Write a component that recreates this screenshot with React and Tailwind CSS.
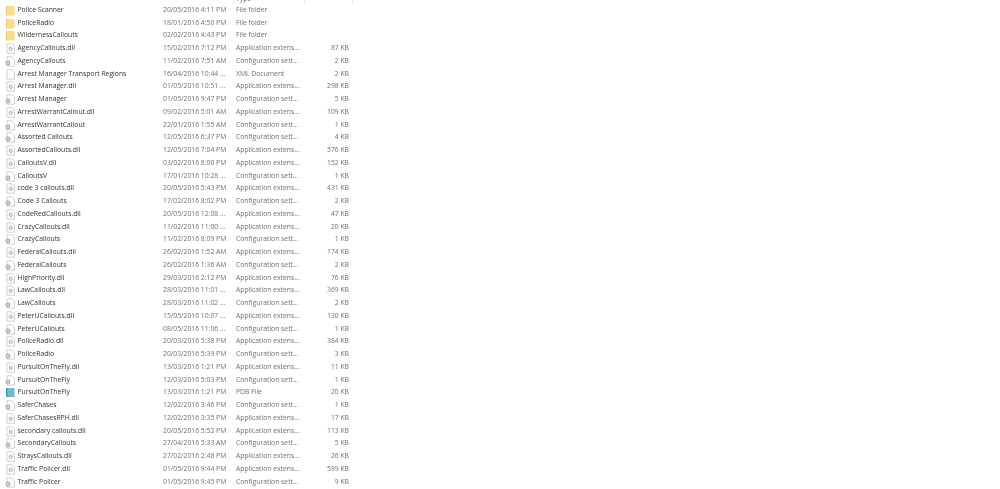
const FOLDER = 'folder', DLL = 'dll', CFG = 'cfg', XML = 'xml', PDB = 'pdb';
const APP = 'Application extens...', CONF = 'Configuration sett...';

const files = [
  ['Police Scanner', '20/05/2016 4:11 PM', 'File folder', '', FOLDER],
  ['PoliceRadio', '18/01/2016 4:50 PM', 'File folder', '', FOLDER],
  ['WildernessCallouts', '02/02/2016 4:43 PM', 'File folder', '', FOLDER],
  ['AgencyCallouts.dll', '15/02/2016 7:12 PM', APP, '87 KB', DLL],
  ['AgencyCallouts', '11/02/2016 7:51 AM', CONF, '2 KB', CFG],
  ['Arrest Manager Transport Regions', '16/04/2016 10:44 ...', 'XML Document', '2 KB', XML],
  ['Arrest Manager.dll', '01/05/2016 10:51 ...', APP, '298 KB', DLL],
  ['Arrest Manager', '01/05/2016 9:47 PM', CONF, '5 KB', CFG],
  ['ArrestWarrantCallout.dll', '09/02/2016 5:01 AM', APP, '109 KB', DLL],
  ['ArrestWarrantCallout', '22/01/2016 1:55 AM', CONF, '1 KB', CFG],
  ['Assorted Callouts', '12/05/2016 6:37 PM', CONF, '4 KB', CFG],
  ['AssortedCallouts.dll', '12/05/2016 7:04 PM', APP, '576 KB', DLL],
  ['CalloutsV.dll', '03/02/2016 8:00 PM', APP, '152 KB', DLL],
  ['CalloutsV', '17/01/2016 10:28 ...', CONF, '1 KB', CFG],
  ['code 3 callouts.dll', '20/05/2016 5:43 PM', APP, '431 KB', DLL],
  ['Code 3 Callouts', '17/02/2016 8:02 PM', CONF, '2 KB', CFG],
  ['CodeRedCallouts.dll', '20/05/2016 12:08 ...', APP, '47 KB', DLL],
  ['CrazyCallouts.dll', '11/02/2016 11:00 ...', APP, '20 KB', DLL],
  ['CrazyCallouts', '11/02/2016 8:09 PM', CONF, '1 KB', CFG],
  ['FederalCallouts.dll', '26/02/2016 1:52 AM', APP, '174 KB', DLL],
  ['FederalCallouts', '26/02/2016 1:36 AM', CONF, '2 KB', CFG],
  ['HighPriority.dll', '29/03/2016 2:12 PM', APP, '76 KB', DLL],
  ['LawCallouts.dll', '28/03/2016 11:01 ...', APP, '369 KB', DLL],
  ['LawCallouts', '28/03/2016 11:02 ...', CONF, '2 KB', CFG],
  ['PeterUCallouts.dll', '15/05/2016 10:07 ...', APP, '130 KB', DLL],
  ['PeterUCallouts', '08/05/2016 11:06 ...', CONF, '1 KB', CFG],
  ['PoliceRadio.dll', '20/03/2016 5:38 PM', APP, '384 KB', DLL],
  ['PoliceRadio', '20/03/2016 5:39 PM', CONF, '3 KB', CFG],
  ['PursuitOnTheFly.dll', '13/03/2016 1:21 PM', APP, '11 KB', DLL],
  ['PursuitOnTheFly', '12/03/2016 5:03 PM', CONF, '1 KB', CFG],
  ['PursuitOnTheFly', '13/03/2016 1:21 PM', 'PDB File', '20 KB', PDB],
  ['SaferChases', '12/02/2016 3:46 PM', CONF, '1 KB', CFG],
  ['SaferChasesRPH.dll', '12/02/2016 3:35 PM', APP, '17 KB', DLL],
  ['secondary callouts.dll', '20/05/2016 5:52 PM', APP, '113 KB', DLL],
  ['SecondaryCallouts', '27/04/2016 5:33 AM', CONF, '5 KB', CFG],
  ['StraysCallouts.dll', '27/02/2016 2:48 PM', APP, '26 KB', DLL],
  ['Traffic Policer.dll', '01/05/2016 9:44 PM', APP, '589 KB', DLL],
  ['Traffic Policer', '01/05/2016 9:45 PM', CONF, '9 KB', CFG],
];

const Page = () => (
  <path d="M2 .8H7L9.5 3.2V10.2H2Z" fill="#fff" stroke="#bdbdbd" strokeWidth=".7" />
);

const FileIcon = ({ kind }) => (
  <svg viewBox="0 0 11 11" className="w-[11px] h-[11px] shrink-0">
    {kind === FOLDER && (
      <>
        <rect x="1" y="1" width="8.5" height="9.5" fill="#fcdc82" />
        <rect x="1" y="1" width="1" height="9.5" fill="#eec66a" />
      </>
    )}
    {kind === DLL && (
      <>
        <Page />
        <circle cx="5.8" cy="5.8" r="1.8" fill="#d5dde4" stroke="#a3aeb8" strokeWidth=".7" />
      </>
    )}
    {kind === CFG && (
      <>
        <Page />
        <circle cx="3" cy="7" r="2.2" fill="#c4c4c4" stroke="#999" strokeWidth=".6" />
        <circle cx="3" cy="7" r=".6" fill="#fff" />
      </>
    )}
    {kind === XML && <Page />}
    {kind === PDB && (
      <>
        <rect x="1" y="1" width="8.5" height="9" fill="#6cbcd4" />
        <path d="M1 10L2.5 8.5H9.5V10Z" fill="#9aa7ae" />
        <rect x="1" y="1" width="1.5" height="9" fill="#4a94ae" />
      </>
    )}
  </svg>
);

export default function App() {
  return (
    <div className="w-[1000px] h-[489px] overflow-hidden bg-white text-[6.8px] leading-none blur-[0.25px]" style={{ fontFamily: '"Open Sans", "Noto Sans", sans-serif' }}>
      <div className="flex h-[4px] overflow-hidden ml-[233px] w-[121px]">
        <div className="w-[72px] border-x border-[#e6e6e6] pl-[2px] text-[#6d6d6d]">
          <div className="-mt-[4px]">Type</div>
        </div>
        <div className="w-[48px] border-r border-[#e6e6e6]" />
      </div>
      {files.map((f, i) => (
        <div key={i} className="flex items-center h-[12.75px] whitespace-nowrap">
          <div className="w-[163px] flex items-center pl-[5px] gap-[1.5px] text-[#333]">
            <FileIcon kind={f[4]} />
            <span>{f[0]}</span>
          </div>
          <div className="w-[73px] text-[#707070]">{f[1]}</div>
          <div className="w-[85px] text-[#707070]">{f[2]}</div>
          <div className="w-[28px] text-right text-[#707070]">{f[3]}</div>
        </div>
      ))}
    </div>
  );
}
